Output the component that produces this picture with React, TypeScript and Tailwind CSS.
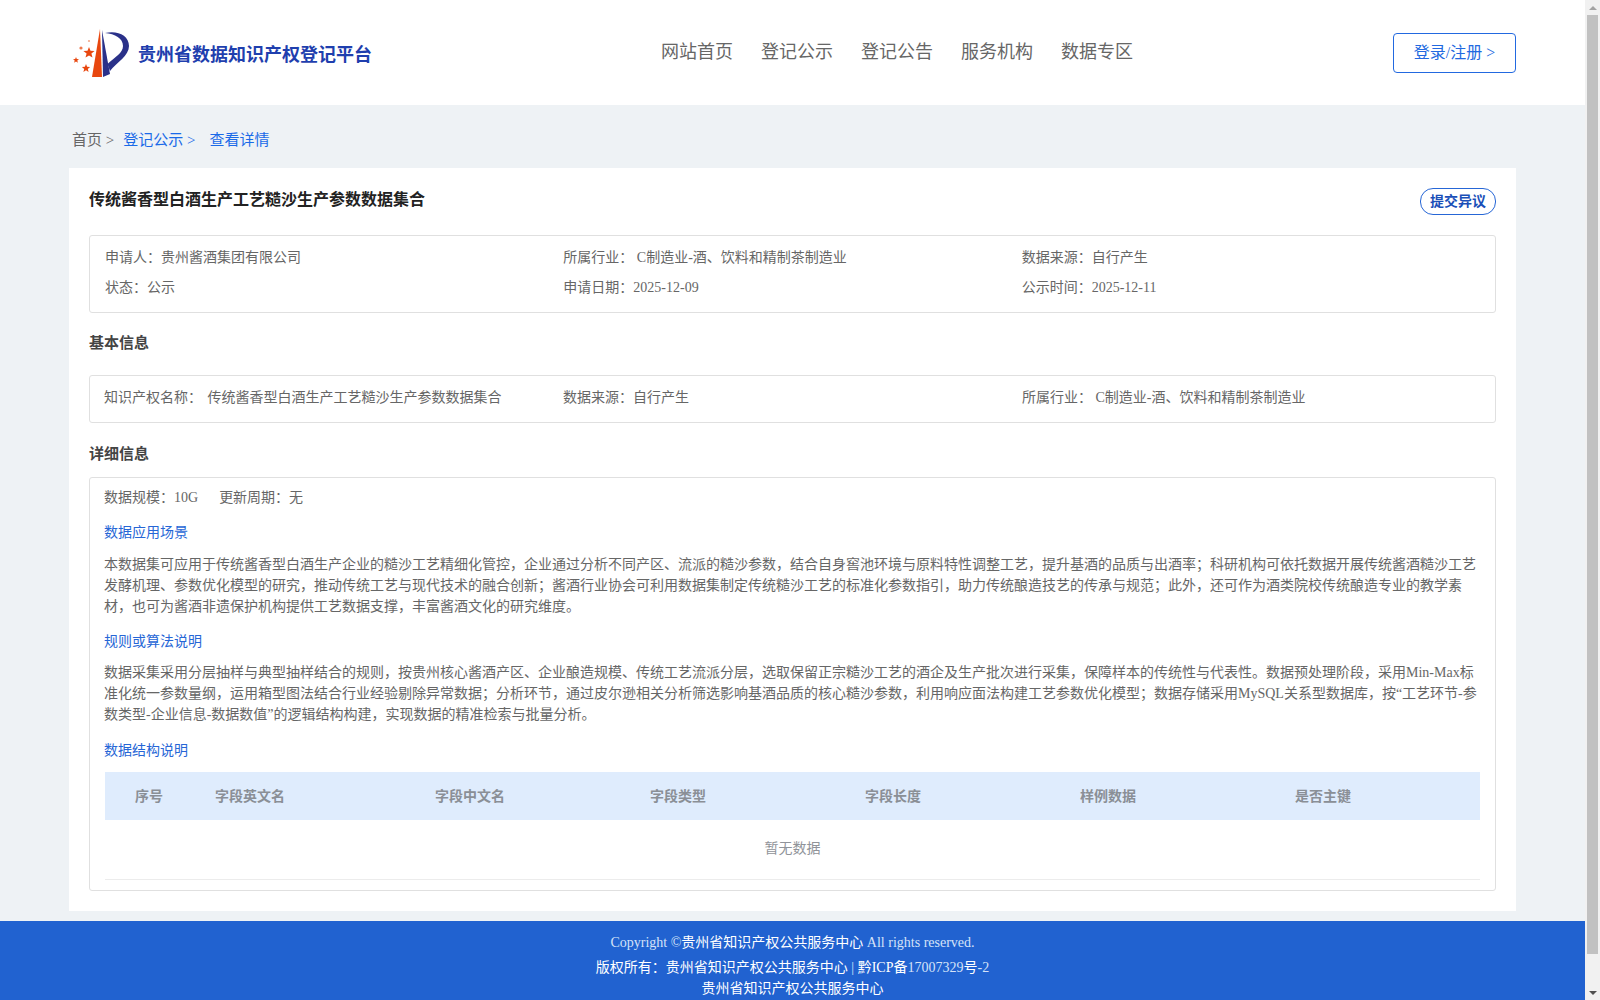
const serif = "font-['Liberation_Serif','Noto_Sans_CJK_SC',serif]";

function Logo() {
  return (
    <svg width="56" height="48" viewBox="0 0 56 48" className="shrink-0">
      <path d="M27 0 L29 48 L19 48 Z" fill="#e8470f" />
      <path d="M29 1 L37 45 L30 48 Z" fill="#2a3189" />
      <path d="M32 4 C44 1 56 6 56 17 C56 27 44 33 37 42 L34.5 35 C42 28 50 24 50 17 C50 9 42 5 32 4 Z" fill="#2a3189" />
      <path d="M16 18 L17.5 21.8 L21.6 22 L18.4 24.6 L19.5 28.6 L16 26.4 L12.5 28.6 L13.6 24.6 L10.4 22 L14.5 21.8 Z" fill="#e8470f" />
      <path d="M3 28 L3.8 30 L6 30.2 L4.3 31.6 L4.9 33.8 L3 32.6 L1.1 33.8 L1.7 31.6 L0 30.2 L2.2 30 Z" fill="#e8470f" />
      <path d="M13 35 L14.1 37.8 L17.1 38 L14.8 39.9 L15.6 42.9 L13 41.3 L10.4 42.9 L11.2 39.9 L8.9 38 L11.9 37.8 Z" fill="#e8470f" />
      <circle cx="8" cy="19" r="1.6" fill="#ee7a50" />
      <circle cx="16" cy="12" r="1.1" fill="#f3a88a" />
    </svg>
  );
}

function Section({ children, className }: { children: React.ReactNode; className: string }) {
  return <div className={`text-[14px] leading-[20px] text-[#2666d6] ${className}`}>{children}</div>;
}

function Para({ children, className }: { children: React.ReactNode; className: string }) {
  return <p className={`text-[14px] leading-[21px] text-[#666] ${className}`}>{children}</p>;
}

function Cell({ children, w }: { children: React.ReactNode; w: string }) {
  return <div className={w}>{children}</div>;
}

export default function App() {
  return (
    <div className={`flex h-screen overflow-hidden bg-[#eef2f5] ${serif}`}>
      <div className="flex-1 min-w-0 overflow-hidden flex flex-col">
        <header className="h-[105px] shrink-0 bg-white flex items-center relative">
          <div className="w-[516px] pl-[73px] flex items-center gap-[9px]">
            <Logo />
            <span className="pt-[6px] text-[18px] font-bold text-[#1f3fae] whitespace-nowrap">贵州省数据知识产权登记平台</span>
          </div>
          <nav className="flex gap-[28px] text-[18px] text-[#666] -mt-[1px] ml-[145px]">
            <span>网站首页</span>
            <span>登记公示</span>
            <span>登记公告</span>
            <span>服务机构</span>
            <span>数据专区</span>
          </nav>
          <div className="ml-auto mr-[69px] w-[123px] h-[40px] pt-[1px] border border-[#2269e0] rounded-[4px] flex items-center justify-center text-[16px] text-[#2269e0]">
            登录/注册 &gt;
          </div>
        </header>

        <div className="shrink-0 h-[63px] pl-[72px] pt-[7px] flex items-center text-[15px] text-[#666]">
          <span>首页 &gt;</span>
          <span className="ml-[9px] text-[#1a6ae8]">登记公示 &gt;</span>
          <span className="ml-[14px] text-[#1a6ae8]">查看详情</span>
        </div>

        <main className="mx-[69px] bg-white px-[20px] pt-[20px] h-[743px] shrink-0">
          <div className="flex items-start justify-between">
            <h1 className="mt-[1px] text-[16px] leading-[22px] font-bold text-[#222]">传统酱香型白酒生产工艺糙沙生产参数数据集合</h1>
            <div className="w-[76px] h-[27px] border border-[#2666d6] rounded-[13px] flex items-center justify-center text-[14px] font-bold text-[#1a4fb8]">提交异议</div>
          </div>

          <div className="mt-[20px] border border-[#e0e0e0] rounded-[3px] px-[15px] pt-[7px] pb-[9px] text-[14px] text-[#666] leading-[30px] grid grid-cols-3">
            <div>申请人：贵州酱酒集团有限公司</div>
            <div>所属行业： C制造业-酒、饮料和精制茶制造业</div>
            <div>数据来源：自行产生</div>
            <div>状态：公示</div>
            <div>申请日期：2025-12-09</div>
            <div>公示时间：2025-12-11</div>
          </div>

          <h2 className="mt-[19px] text-[15px] leading-[22px] font-bold text-[#444]">基本信息</h2>

          <div className="mt-[21px] h-[48px] pb-[4px] border border-[#e0e0e0] rounded-[3px] px-[14px] text-[14px] text-[#666] grid grid-cols-3 items-center">
            <div>知识产权名称： <span className="ml-[2px]">传统酱香型白酒生产工艺糙沙生产参数数据集合</span></div>
            <div>数据来源：自行产生</div>
            <div>所属行业： C制造业-酒、饮料和精制茶制造业</div>
          </div>

          <h2 className="mt-[20px] text-[15px] leading-[22px] font-bold text-[#444]">详细信息</h2>

          <div className="mt-[12px] h-[414px] border border-[#e0e0e0] rounded-[3px] px-[14px] pt-[10px]">
            <div className="text-[14px] leading-[20px] text-[#666] flex gap-[21px]">
              <span>数据规模：10G</span>
              <span>更新周期：无</span>
            </div>
            <Section className="mt-[15px]">数据应用场景</Section>
            <Para className="mt-[11px]">
              本数据集可应用于传统酱香型白酒生产企业的糙沙工艺精细化管控，企业通过分析不同产区、流派的糙沙参数，结合自身窖池环境与原料特性调整工艺，提升基酒的品质与出酒率；科研机构可依托数据开展传统酱酒糙沙工艺发酵机理、参数优化模型的研究，推动传统工艺与现代技术的融合创新；酱酒行业协会可利用数据集制定传统糙沙工艺的标准化参数指引，助力传统酿造技艺的传承与规范；此外，还可作为酒类院校传统酿造专业的教学素材，也可为酱酒非遗保护机构提供工艺数据支撑，丰富酱酒文化的研究维度。
            </Para>
            <Section className="mt-[15px]">规则或算法说明</Section>
            <Para className="mt-[10px]">
              数据采集采用分层抽样与典型抽样结合的规则，按贵州核心酱酒产区、企业酿造规模、传统工艺流派分层，选取保留正宗糙沙工艺的酒企及生产批次进行采集，保障样本的传统性与代表性。数据预处理阶段，采用Min-Max标准化统一参数量纲，运用箱型图法结合行业经验剔除异常数据；分析环节，通过皮尔逊相关分析筛选影响基酒品质的核心糙沙参数，利用响应面法构建工艺参数优化模型；数据存储采用MySQL关系型数据库，按“工艺环节-参数类型-企业信息-数据数值”的逻辑结构构建，实现数据的精准检索与批量分析。
            </Para>
            <Section className="mt-[16px]">数据结构说明</Section>
            <div className="mt-[11px] mx-[1px] h-[48px] bg-[#dfecfd] flex items-center text-[14px] font-bold text-[#8a8f96]">
              <Cell w="w-[110px] pl-[30px]">序号</Cell>
              <Cell w="w-[220px]">字段英文名</Cell>
              <Cell w="w-[215px]">字段中文名</Cell>
              <Cell w="w-[215px]">字段类型</Cell>
              <Cell w="w-[215px]">字段长度</Cell>
              <Cell w="w-[215px]">样例数据</Cell>
              <Cell w="w-auto">是否主键</Cell>
            </div>
            <div className="mx-[1px] h-[60px] pb-[2px] border-b border-[#ececec] flex items-center justify-center text-[14px] text-[#909399]">暂无数据</div>
          </div>
        </main>

        <footer className="mt-[10px] flex-1 bg-[#2162d0] text-center text-[14px] text-white pt-[11px]">
          <div className="leading-[22px] text-[#d5e2f8]">Copyright ©<span className="text-white">贵州省知识产权公共服务中心</span> All rights reserved.</div>
          <div className="mt-[4px] leading-[20px]">版权所有：贵州省知识产权公共服务中心 <span className="text-[#d5e2f8]">| </span>黔ICP备<span className="text-[#d5e2f8]">17007329</span>号<span className="text-[#d5e2f8]">-2</span></div>
          <div className="mt-[1px] leading-[20px]">贵州省知识产权公共服务中心</div>
        </footer>
      </div>

      <aside className="w-[15px] shrink-0 bg-[#f1f1f1] flex flex-col items-center">
        <div className="h-[15px] shrink-0 flex items-center justify-center">
          <div className="w-0 h-0 border-x-[4px] border-x-transparent border-b-[4px] border-b-[#a3a3a3]" />
        </div>
        <div className="w-[11px] h-[939px] shrink-0 bg-[#c1c1c1] mx-auto" />
        <div className="flex-1 flex items-end justify-center pb-[5px]">
          <div className="w-0 h-0 border-x-[4px] border-x-transparent border-t-[4px] border-t-[#505050]" />
        </div>
      </aside>
    </div>
  );
}
